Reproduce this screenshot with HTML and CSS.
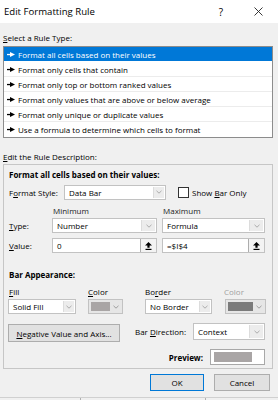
FILE: index.html
```html
<!DOCTYPE html>
<html>
<head>
<meta charset="utf-8">
<link rel="stylesheet" href="styles.css">
</head>
<body>
<div class="titlebar">
  <span class="title">Edit Formatting Rule</span>
  <span class="help">?</span>
  <span class="close"><svg width="9" height="9" viewBox="0 0 9 9"><path d="M0.5 0.5 L8.5 8.5 M8.5 0.5 L0.5 8.5" stroke="#222" stroke-width="0.9" fill="none"/></svg></span>
</div>
<div class="main">
  <div class="lbl sel-lbl"><u>S</u>elect a Rule Type:</div>
  <ul class="list">
    <li class="sel"><svg class="arrow" width="8" height="5" viewBox="0 0 8 5"><rect x="0" y="1.9" width="4" height="1.3" fill="#fff"/><path d="M3 0 L8 2.5 L3 5 Z" fill="#fff"/></svg>Format all cells based on their values</li>
    <li><svg class="arrow" width="8" height="5" viewBox="0 0 8 5"><rect x="0" y="1.9" width="4" height="1.3" fill="#000"/><path d="M3 0 L8 2.5 L3 5 Z" fill="#000"/></svg>Format only cells that contain</li>
    <li><svg class="arrow" width="8" height="5" viewBox="0 0 8 5"><rect x="0" y="1.9" width="4" height="1.3" fill="#000"/><path d="M3 0 L8 2.5 L3 5 Z" fill="#000"/></svg>Format only top or bottom ranked values</li>
    <li><svg class="arrow" width="8" height="5" viewBox="0 0 8 5"><rect x="0" y="1.9" width="4" height="1.3" fill="#000"/><path d="M3 0 L8 2.5 L3 5 Z" fill="#000"/></svg>Format only values that are above or below average</li>
    <li><svg class="arrow" width="8" height="5" viewBox="0 0 8 5"><rect x="0" y="1.9" width="4" height="1.3" fill="#000"/><path d="M3 0 L8 2.5 L3 5 Z" fill="#000"/></svg>Format only unique or duplicate values</li>
    <li><svg class="arrow" width="8" height="5" viewBox="0 0 8 5"><rect x="0" y="1.9" width="4" height="1.3" fill="#000"/><path d="M3 0 L8 2.5 L3 5 Z" fill="#000"/></svg>Use a formula to determine which cells to format</li>
  </ul>
  <div class="lbl desc-lbl"><u>E</u>dit the Rule Description:</div>
  <div class="group">
    <div class="heading">Format all cells based on their values:</div>
    <div class="row style-row">
      <span class="w-style">F<u>o</u>rmat Style:</span>
      <div class="combo w-databar"><span class="val">Data Bar</span><span class="arr"><svg width="6" height="4" viewBox="0 0 6 4"><path d="M0.5 0.8 L3 3.2 L5.5 0.8" stroke="#9a9a9a" fill="none" stroke-width="0.8"/></svg></span></div>
      <span class="check"></span>
      <span class="check-lbl">Show <u>B</u>ar Only</span>
    </div>
    <div class="row mm-row">
      <span class="mm1">Minimum</span>
      <span>Maximum</span>
    </div>
    <div class="row type-row">
      <span class="w-type"><u>T</u>ype:</span>
      <div class="combo w-min"><span class="val">Number</span><span class="arr wide"><svg width="6" height="4" viewBox="0 0 6 4"><path d="M0.5 0.8 L3 3.2 L5.5 0.8" stroke="#9a9a9a" fill="none" stroke-width="0.8"/></svg></span></div>
      <div class="combo w-max"><span class="val">Formula</span><span class="arr wide"><svg width="6" height="4" viewBox="0 0 6 4"><path d="M0.5 0.8 L3 3.2 L5.5 0.8" stroke="#9a9a9a" fill="none" stroke-width="0.8"/></svg></span></div>
    </div>
    <div class="row value-row">
      <span class="w-type"><u>V</u>alue:</span>
      <div class="tbox w-min"><span class="val">0</span><span class="rbtn"><svg width="7" height="8" viewBox="0 0 7 8"><path d="M3.5 0 L7 3.6 H4.6 V5.8 H2.4 V3.6 H0 Z" fill="#000"/><rect x="0.5" y="6.8" width="6" height="1.2" fill="#000"/></svg></span></div>
      <div class="tbox w-max"><span class="val">=$I$4</span><span class="rbtn"><svg width="7" height="8" viewBox="0 0 7 8"><path d="M3.5 0 L7 3.6 H4.6 V5.8 H2.4 V3.6 H0 Z" fill="#000"/><rect x="0.5" y="6.8" width="6" height="1.2" fill="#000"/></svg></span></div>
    </div>
    <div class="heading bar-heading">Bar Appearance:</div>
    <div class="row fl-row">
      <span class="fl1"><u>F</u>ill</span>
      <span class="fl2"><u>C</u>olor</span>
      <span class="fl3">Bo<u>r</u>der</span>
      <span class="fl4 disabled">Color</span>
    </div>
    <div class="row fill-row">
      <div class="combo w-fill"><span class="val">Solid Fill</span><span class="arr"><svg width="6" height="4" viewBox="0 0 6 4"><path d="M0.5 0.8 L3 3.2 L5.5 0.8" stroke="#9a9a9a" fill="none" stroke-width="0.8"/></svg></span></div>
      <div class="cpick w-c1"><span class="swatch light"></span><span class="carr"><svg width="6" height="4" viewBox="0 0 6 4"><path d="M0.5 0.8 L3 3.2 L5.5 0.8" stroke="#8a8a8a" fill="none" stroke-width="0.8"/></svg></span></div>
      <div class="combo w-border"><span class="val">No Border</span><span class="arr"><svg width="6" height="4" viewBox="0 0 6 4"><path d="M0.5 0.8 L3 3.2 L5.5 0.8" stroke="#9a9a9a" fill="none" stroke-width="0.8"/></svg></span></div>
      <div class="cpick w-c2"><span class="swatch dark"></span><span class="carr"><svg width="6" height="4" viewBox="0 0 6 4"><path d="M0.5 0.8 L3 3.2 L5.5 0.8" stroke="#8a8a8a" fill="none" stroke-width="0.8"/></svg></span></div>
    </div>
    <div class="row neg-row">
      <div class="btn w-neg"><span><u>N</u>egative Value and Axis...</span></div>
      <span class="w-dir">Bar <u>D</u>irection:</span>
      <div class="combo w-ctx"><span class="val">Context</span><span class="arr wide"><svg width="6" height="4" viewBox="0 0 6 4"><path d="M0.5 0.8 L3 3.2 L5.5 0.8" stroke="#9a9a9a" fill="none" stroke-width="0.8"/></svg></span></div>
    </div>
    <div class="row preview-row">
      <span class="w-prev">Preview:</span>
      <div class="prevbox"><span class="prevbar"></span></div>
    </div>
  </div>
  <div class="buttons">
    <div class="btn default w-ok">OK</div>
    <div class="btn w-cancel">Cancel</div>
  </div>
</div>
<div class="status"><span class="tick t1"></span><span class="tick t2"></span></div>
</body>
</html>
```

FILE: styles.css
```css
* { box-sizing: border-box; }
html, body { margin: 0; padding: 0; }
body {
  width: 278px;
  height: 400px;
  overflow: hidden;
  background: #f0f0f0;
  font-family: "Open Sans", "Noto Sans", sans-serif;
  font-size: 8px;
  color: #000;
}
u { text-decoration: underline; text-underline-offset: 1px; text-decoration-thickness: 0.6px; }

.titlebar {
  height: 23px;
  background: #fff;
  display: flex;
  align-items: center;
  padding-left: 4px;
}
.title { flex: 1; font-size: 9.6px; }
.help { width: 10px; text-align: center; font-size: 10px; margin-right: 26px; }
.close { width: 12px; display: flex; justify-content: center; margin-right: 14px; }

.lbl { height: 12px; line-height: 12px; padding-left: 3px; }
.sel-lbl { margin-top: 9px; }
.desc-lbl { margin-top: 13px; }

.list {
  margin: 2px 5px 0 3px;
  padding: 0;
  list-style: none;
  height: 92px;
  border: 1px solid #8c8c8c;
  background: #fff;
}
.list li {
  height: 15px;
  display: flex;
  align-items: center;
  padding-left: 3px;
  border-bottom: 1px solid #ececec;
  white-space: nowrap;
}
.list li:last-child { border-bottom: none; }
.list li.sel { background: #0078d7; color: #fff; border-bottom-color: #fff; }
.arrow { margin-right: 3px; flex: none; }

.group {
  margin: 1px 5px 0 3px;
  height: 205px;
  border: 1px solid #c6c6c6;
  padding: 4px 0 0 5px;
}
.heading { font-weight: 700; height: 12px; line-height: 12px; }
.row { display: flex; align-items: center; white-space: nowrap; }

.style-row { margin-top: 3px; height: 16px; }
.w-style { width: 55px; }
.w-databar { width: 102px; height: 16px; }
.check { width: 11px; height: 11px; border: 1px solid #333; background: #fff; margin-left: 12px; }
.check-lbl { margin-left: 3px; }

.mm-row { margin-top: 4px; height: 12px; color: #222; }
.mm1 { margin-left: 44px; width: 110px; }

.type-row { margin-top: 2px; height: 15px; }
.value-row { margin-top: 5px; height: 15px; }
.w-type { width: 43px; }
.w-min { width: 105px; }
.w-max { width: 103px; margin-left: 5px; }

.combo {
  display: flex;
  height: 15px;
  border: 1px solid #c2c2c2;
  background: #fff;
}
.combo .val, .tbox .val { flex: 1; padding-left: 4px; display: flex; align-items: center; }
.combo .arr {
  width: 11px;
  margin: 1px;
  background: #ececec;
  border-left: 1px solid #dcdcdc;
  display: flex;
  align-items: center;
  justify-content: center;
}
.combo .arr.wide { width: 14px; }

.tbox {
  display: flex;
  height: 15px;
  border: 1px solid #c2c2c2;
  background: #fff;
}
.rbtn {
  width: 16px;
  border-left: 1px solid #adadad;
  background: #f3f3f3;
  display: flex;
  align-items: center;
  justify-content: center;
}

.bar-heading { margin-top: 16px; }
.fl-row { margin-top: 4px; height: 12px; }
.fl1 { width: 79px; }
.fl2 { width: 57px; }
.fl3 { width: 79px; }
.disabled { color: #a0a0a0; }

.fill-row { margin-top: 2px; height: 15px; }
.w-fill { width: 68px; margin-left: -1px; }
.w-c1 { width: 35px; margin-left: 12px; }
.w-border { width: 67px; margin-left: 22px; }
.w-c2 { width: 41px; margin-left: 13px; }
.cpick {
  display: flex;
  height: 15px;
  border: 1px solid #c2c2c2;
  background: #e6e6e6;
  padding: 2px 0 2px 2px;
}
.swatch { flex: 1; }
.swatch.light { background: #a9a5a5; }
.swatch.dark { background: #7b7b7b; }
.carr { width: 12px; display: flex; align-items: center; justify-content: center; }

.neg-row { margin-top: 9px; height: 19px; align-items: flex-start; }
.btn {
  display: flex;
  align-items: center;
  justify-content: center;
  background: #e1e1e1;
  border: 1px solid #adadad;
}
.w-neg { width: 112px; height: 18px; margin-left: -1px; margin-top: 1px; }
.w-dir { width: 58px; margin-left: 15px; height: 18px; line-height: 18px; }
.w-ctx { width: 72px; height: 17px; }

.preview-row { margin-top: 7px; height: 16px; }
.w-prev { width: 194px; text-align: right; font-weight: 700; }
.prevbox {
  width: 55px;
  height: 16px;
  margin-left: 7px;
  border: 1px solid #a8a8a8;
  background: #fff;
  padding: 2px 0 2px 3px;
  display: flex;
}
.prevbar { width: 38px; background: #a9a5a5; }

.buttons { display: flex; margin-top: 5px; padding-left: 150px; height: 17px; }
.w-ok { width: 54px; height: 17px; }
.btn.default { border-color: #0078d7; }
.w-cancel { width: 56px; height: 17px; margin-left: 10px; }

.status {
  margin-top: 6px;
  height: 3px;
  border-top: 1px solid #d0d0d0;
  position: relative;
}
.tick { position: absolute; top: 0; width: 1px; height: 3px; background: #b0b0b0; }
.t1 { left: 80px; }
.t2 { left: 205px; }
```
